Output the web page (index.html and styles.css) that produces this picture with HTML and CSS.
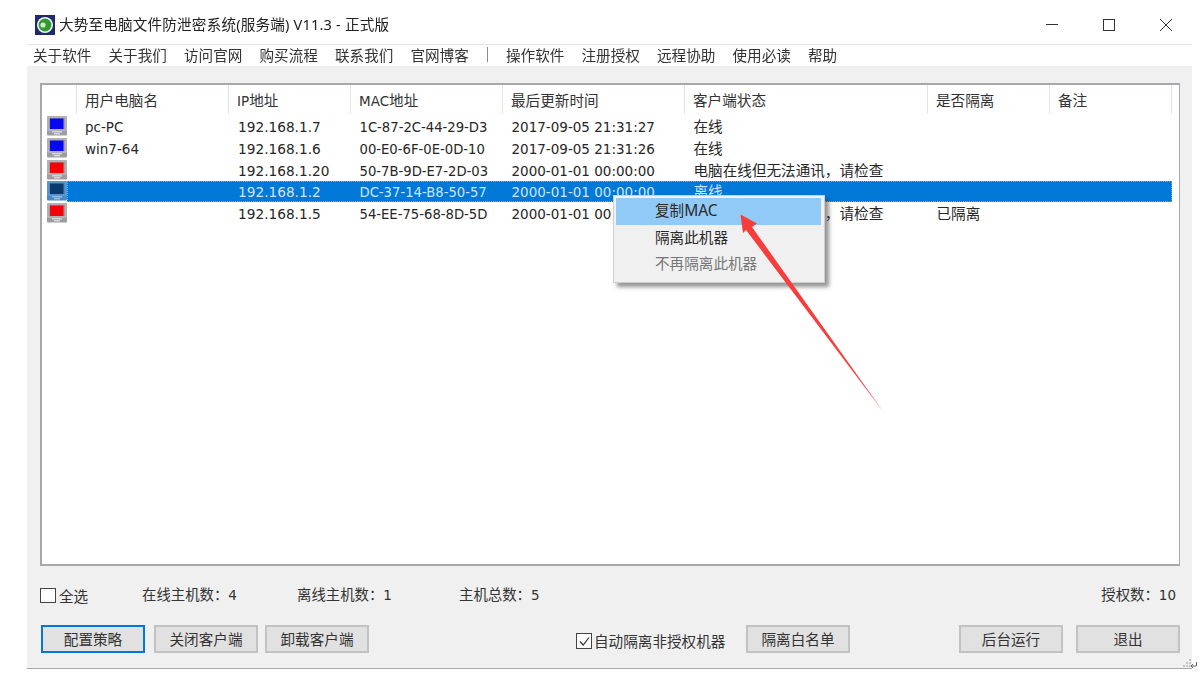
FILE: index.html
```html
<!DOCTYPE html>
<html lang="zh-CN">
<head>
<meta charset="utf-8">
<title>大势至电脑文件防泄密系统</title>
<link rel="stylesheet" href="styles.css">
</head>
<body>
<svg class="defs" width="0" height="0" aria-hidden="true">
  <symbol id="pc" viewBox="0 0 20 20">
    <rect class="pc-case" x="0" y="0" width="20" height="19.5" rx="1"/>
    <rect class="pc-edge" x="1" y="1" width="18" height="13" fill="none" stroke-width="1"/>
    <rect class="pc-screen" x="3" y="2.5" width="13.5" height="10.5"/>
    <rect class="pc-foot" x="5" y="15" width="10" height="1.5"/>
    <rect class="pc-foot" x="7" y="17" width="6" height="1.5"/>
  </symbol>
</svg>
<div class="window">
  <header class="titlebar">
    <svg class="app-icon" width="20" height="20" viewBox="0 0 20 20">
      <rect width="20" height="20" fill="#20296b"/>
      <circle cx="10" cy="10" r="8" fill="#f2f5ee"/>
      <circle cx="10" cy="10" r="6.4" fill="#2f9a34"/>
      <circle cx="8" cy="10" r="2.6" fill="#cfeec0"/>
    </svg>
    <span class="title">大势至电脑文件防泄密系统(服务端) V11.3 - 正式版</span>
    <div class="controls">
      <svg width="12" height="12" viewBox="0 0 12 12"><path d="M0 5.5H12" stroke="#333" fill="none"/></svg>
      <svg width="12" height="12" viewBox="0 0 12 12"><rect x=".5" y=".5" width="11" height="11" stroke="#333" fill="none"/></svg>
      <svg width="12" height="12" viewBox="0 0 12 12"><path d="M0 0L12 12M12 0L0 12" stroke="#333" fill="none"/></svg>
    </div>
  </header>
  <nav class="menubar">
    <span>关于软件</span><span>关于我们</span><span>访问官网</span><span>购买流程</span><span>联系我们</span><span>官网博客</span>
    <i class="menu-sep"></i>
    <span>操作软件</span><span>注册授权</span><span>远程协助</span><span>使用必读</span><span>帮助</span>
  </nav>
  <main class="client">
    <section class="list">
      <div class="list-head">
        <div class="hcell lead"></div>
        <div class="hcell">用户电脑名</div>
        <div class="hcell"><span class="lat">IP</span>地址</div>
        <div class="hcell"><span class="lat">MAC</span>地址</div>
        <div class="hcell">最后更新时间</div>
        <div class="hcell">客户端状态</div>
        <div class="hcell">是否隔离</div>
        <div class="hcell">备注</div>
      </div>
      <div class="row online">
        <svg class="pc" width="20" height="20"><use href="#pc"/></svg>
        <div class="cells">
          <div class="cell lat">pc-PC</div><div class="cell lat ip">192.168.1.7</div><div class="cell lat mac">1C-87-2C-44-29-D3</div><div class="cell lat">2017-09-05 21:31:27</div><div class="cell cjk">在线</div><div class="cell cjk"></div><div class="cell"></div>
        </div>
      </div>
      <div class="row online">
        <svg class="pc" width="20" height="20"><use href="#pc"/></svg>
        <div class="cells">
          <div class="cell lat">win7-64</div><div class="cell lat ip">192.168.1.6</div><div class="cell lat mac">00-E0-6F-0E-0D-10</div><div class="cell lat">2017-09-05 21:31:26</div><div class="cell cjk">在线</div><div class="cell cjk"></div><div class="cell"></div>
        </div>
      </div>
      <div class="row alert">
        <svg class="pc" width="20" height="20"><use href="#pc"/></svg>
        <div class="cells">
          <div class="cell lat"></div><div class="cell lat ip">192.168.1.20</div><div class="cell lat mac">50-7B-9D-E7-2D-03</div><div class="cell lat">2000-01-01 00:00:00</div><div class="cell cjk">电脑在线但无法通讯，请检查</div><div class="cell cjk"></div><div class="cell"></div>
        </div>
      </div>
      <div class="row selected">
        <svg class="pc" width="20" height="20"><use href="#pc"/></svg>
        <div class="cells">
          <div class="cell lat"></div><div class="cell lat ip">192.168.1.2</div><div class="cell lat mac">DC-37-14-B8-50-57</div><div class="cell lat">2000-01-01 00:00:00</div><div class="cell cjk">离线</div><div class="cell cjk"></div><div class="cell"></div>
        </div>
      </div>
      <div class="row alert">
        <svg class="pc" width="20" height="20"><use href="#pc"/></svg>
        <div class="cells">
          <div class="cell lat"></div><div class="cell lat ip">192.168.1.5</div><div class="cell lat mac">54-EE-75-68-8D-5D</div><div class="cell lat">2000-01-01 00:00:00</div><div class="cell cjk">电脑在线但无法通讯，请检查</div><div class="cell cjk">已隔离</div><div class="cell"></div>
        </div>
      </div>
    </section>
    <div class="stats">
      <label class="check-label select-all"><span class="box small"></span>全选</label>
      <span class="stat online-count">在线主机数：<span class="lat">4</span></span>
      <span class="stat offline-count">离线主机数：<span class="lat">1</span></span>
      <span class="stat total-count">主机总数：<span class="lat">5</span></span>
      <span class="stat license-count">授权数：<span class="lat">10</span></span>
    </div>
    <div class="actions">
      <div class="group group-left">
        <button class="btn default">配置策略</button>
        <button class="btn second">关闭客户端</button>
        <button class="btn third">卸载客户端</button>
      </div>
      <div class="group group-mid">
        <label class="check-label auto"><span class="box"><svg width="13" height="13" viewBox="0 0 13 13"><path d="M2 6.5L5.2 10L11 2.5" stroke="#333" stroke-width="1.2" fill="none"/></svg></span>自动隔离非授权机器</label>
        <button class="btn">隔离白名单</button>
      </div>
      <div class="group group-right">
        <button class="btn">后台运行</button>
        <button class="btn">退出</button>
      </div>
    </div>
    <svg class="grip" width="10" height="10" viewBox="0 0 10 10">
      <g fill="#c4c4c4"><rect x="7" y="1" width="2" height="2"/><rect x="4" y="4" width="2" height="2"/><rect x="7" y="4" width="2" height="2"/><rect x="1" y="7" width="2" height="2"/><rect x="4" y="7" width="2" height="2"/><rect x="7" y="7" width="2" height="2"/></g>
    </svg>
  </main>
  <ul class="context-menu">
    <li class="hot">复制<span class="menu-lat">MAC</span></li>
    <li>隔离此机器</li>
    <li class="disabled">不再隔离此机器</li>
  </ul>
</div>
<svg class="return-mark" width="8" height="7" viewBox="0 0 8 7"><path d="M6.5 0V4H1M3 2.2L1 4L3 5.8" stroke="#666" fill="none"/></svg>
<svg class="arrow" width="1202" height="685" viewBox="0 0 1202 685">
  <polygon points="740.5,214.5 757,223.5 752,227 883.5,412 746,230 743,233" fill="#f73c3c"/>
</svg>
</body>
</html>
```
FILE: styles.css
```css
* { box-sizing: border-box; }
html, body { margin: 0; padding: 0; }
body {
  width: 1202px;
  height: 685px;
  overflow: hidden;
  background: #fff;
  position: relative;
  font-family: "Noto Sans CJK SC", "Noto Sans", sans-serif;
  font-size: 14.6px;
  color: #262626;
}
.defs { position: absolute; }
.lat { font-family: "DejaVu Sans", "Noto Sans CJK SC", sans-serif; font-size: 13.5px; }
.ip { font-size: 13.7px; }
.mac { font-size: 13.2px; line-height: 23px; }

.window {
  width: 1165px;
  height: 669px;
  margin-left: 27px;
  display: flex;
  flex-direction: column;
  position: relative;
  filter: blur(0.45px);
}
.titlebar {
  height: 45px;
  flex: none;
  display: flex;
  align-items: center;
  padding: 5px 20px 0 8px;
  border-bottom: 1px solid #e4e4e4;
}
.app-icon { flex: none; margin-right: 4px; }
.title {
  font-family: "Noto Sans", "Noto Sans CJK SC", sans-serif;
  font-size: 14.6px;
  line-height: 20px;
  letter-spacing: 0.17px;
  margin-top: -2px;
  color: #222;
}
.controls { margin-left: auto; display: flex; gap: 45px; }
.menubar {
  height: 21px;
  flex: none;
  display: flex;
  align-items: center;
  gap: 17.1px;
  padding: 0 0 2px 6px;
  line-height: 19px;
  white-space: nowrap;
  color: #333;
}
.menu-sep { width: 1px; height: 15px; background: #8a8a8a; margin: 0 1px; }

.client {
  flex: 1;
  background: #f0f0f0;
  border-bottom: 1px solid #a9a9a9;
  padding: 17px 12px 0 13px;
  display: flex;
  flex-direction: column;
  position: relative;
}
.list {
  height: 483px;
  flex: none;
  background: #fff;
  border: 2px solid #a6a8ab;
  border-right-width: 1px;
  border-bottom-width: 2px;
  padding-right: 7px;
}
.list-head {
  display: grid;
  grid-template-columns: 35px 152px 122px 152px 182px 243px 122px 122px;
  height: 31px;
}
.hcell {
  height: 29px;
  line-height: 29px;
  padding-left: 8px;
  border-right: 1px solid #e5e5e5;
  white-space: nowrap;
  color: #333;
}
.row { display: flex; height: 21.75px; }
.pc { flex: none; margin-left: 5px; width: 20px; height: 20px; }
.cells {
  flex: 1;
  display: grid;
  grid-template-columns: 162px 122px 152px 182px 243px 122px 122px;
  line-height: 22px;
}
.cell { padding-left: 8.5px; white-space: nowrap; overflow: visible; }
.cell:first-child { padding-left: 18px; }
.cell.ip { padding-left: 9px; }
.cell.cjk { line-height: 20px; }

.pc-case { fill: var(--case); }
.pc-edge { stroke: var(--edge); }
.pc-foot { fill: var(--foot); }
.pc-screen { fill: var(--screen); }
.pc { --case: #9b9d9e; --edge: #c4c5c6; --foot: #d5d5d5; }
.online .pc { --screen: #0808f0; }
.alert .pc { --screen: #f4020a; }
.selected .pc { --case: #4a8ac4; --edge: #6aa2d4; --foot: #8fbce4; --screen: #0a3a6e; }
.selected .cells {
  background: #0078d7;
  color: #cfe4f6;
  outline: 1px dotted #d8954c;
  outline-offset: -1px;
  height: 21px;
}

.stats {
  height: 20px;
  margin-top: 18px;
  display: flex;
  align-items: center;
  flex: none;
  white-space: nowrap;
}
.stat { font-size: 14.4px; line-height: 20px; color: #333; }
.check-label { display: flex; align-items: center; line-height: 20px; color: #333; }
.box {
  width: 16px;
  height: 16px;
  flex: none;
  border: 1px solid #444;
  background: #fdfdfd;
  margin-right: 2px;
  display: flex;
  align-items: center;
  justify-content: center;
}
.box.small { height: 15.5px; margin-right: 3px; }
.select-all { width: 102px; padding-top: 3px; }
.online-count { width: 155px; }
.offline-count { width: 162px; }
.total-count { flex: 1; }
.license-count { padding-right: 4px; }

.actions {
  display: flex;
  align-items: center;
  height: 28px;
  margin-top: 21px;
  flex: none;
}
.group { display: flex; align-items: center; }
.group-left { margin-left: 1px; }
.second { margin-left: 9px; }
.third { margin-left: 7px; }
.group-mid { margin-left: 207px; }
.group-right { margin-left: auto; gap: 13px; }
.auto { margin-right: 20px; padding-top: 4px; width: 150px; }
.btn {
  width: 104px;
  height: 28px;
  padding: 0;
  background: #e1e1e1;
  border: 2px solid #c2c2c2;
  font: inherit;
  line-height: 24px;
  color: #333;
}
.btn.default { border-color: #0078d7; }
.grip { position: absolute; right: 0; bottom: 0; }
.return-mark { position: absolute; left: 1190px; top: 662px; }

.context-menu {
  position: absolute;
  left: 586px;
  top: 195px;
  width: 212px;
  height: 88px;
  margin: 0;
  padding: 2px 3px 0 2px;
  list-style: none;
  background: #f0f0f0;
  border: 1px solid #cfcfcf;
  box-shadow: 4px 4px 4px rgba(60, 60, 60, 0.55);
}
.context-menu li {
  height: 26.5px;
  line-height: 24.5px;
  padding-left: 39px;
  color: #2a2a2a;
  white-space: nowrap;
}
.context-menu .hot { background: #91c9f7; }
.context-menu .disabled { color: #777; }
.menu-lat { font-family: "Noto Sans", sans-serif; font-size: 15.5px; }

.arrow { position: absolute; left: 0; top: 0; pointer-events: none; }
```
